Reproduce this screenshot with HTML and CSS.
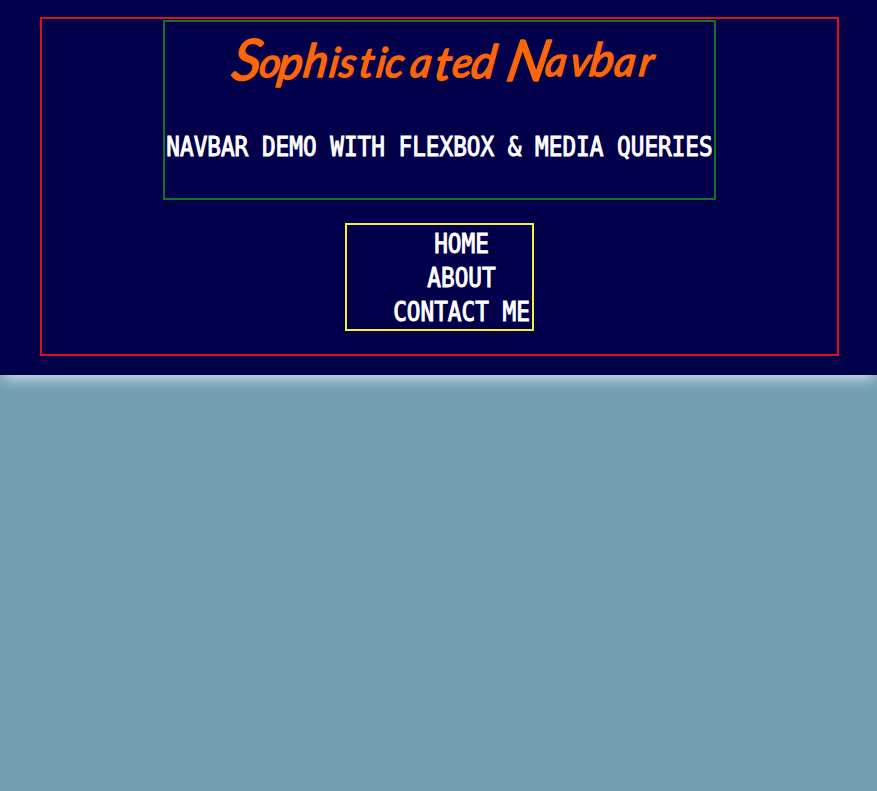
FILE: index.html
```html
<!DOCTYPE html>
<html lang="en">
<head>
<meta charset="utf-8">
<title>Sophisticated Navbar</title>
<link rel="stylesheet" href="styles.css">
</head>
<body>
<header class="header">
  <div class="container">
    <div class="brand">
      <h1 class="title">
        <svg class="logo" width="549" height="84" viewBox="165 22 549 84">
          <text transform="translate(10.8 0) skewX(-8)" y="80 77 79 77 77 77 77 77 77 77 80 77 78" x="231 258 277 302 328 338 358 375 384 409 434 451 470"><tspan class="cap">S</tspan>o<tspan class="tall">ph</tspan>istica<tspan class="tall">t</tspan>e<tspan class="tall">d</tspan></text>
          <text transform="translate(10.8 0) skewX(-12)" class="cap" x="511" y="81">N</text>
          <text transform="translate(10.8 0) skewX(-8)" y="76" x="544 569 588 613 638">av<tspan class="tall">b</tspan>ar</text>
        </svg>
      </h1>
      <p class="subtitle"><span class="pixel">NAVBAR DEMO WITH FLEXBOX &amp; MEDIA QUERIES</span></p>
    </div>
    <nav class="nav">
      <a class="pixel">HOME</a>
      <a class="pixel">ABOUT</a>
      <a class="pixel">CONTACT ME</a>
    </nav>
  </div>
</header>
</body>
</html>
```
FILE: styles.css
```css
* { box-sizing: border-box; }
body {
  margin: 0;
  min-height: 100vh;
  background: #719fb0;
}
.header {
  height: 375px;
  padding: 17px 38px 19px 40px;
  background: #03004b;
  box-shadow: 0 7px 13px -3px #d0def2;
}
.container {
  display: flex;
  flex-direction: column;
  align-items: center;
  height: 339px;
  padding-top: 1px;
  border: 2px solid #dd1020;
}
.brand {
  width: 553px;
  height: 180px;
  border: 2px solid #127324;
}
.title {
  margin: 0;
  height: 84px;
}
.logo {
  display: block;
  overflow: visible;
  fill: #fc6509;
  stroke: #fc6509;
  stroke-width: 1.6;
  stroke-linejoin: round;
  font: italic 400 41px Lato, sans-serif;
}
.cap { font-size: 57px; }
.tall { font-size: 46px; }
.subtitle {
  margin: 24px 0 0;
  height: 34px;
  text-align: center;
}
.pixel {
  display: block;
  height: 34px;
  font: 22.7px/34px "DejaVu Sans Mono", monospace;
  white-space: nowrap;
  color: #fff;
  -webkit-text-stroke: 0.9px #fff;
  transform: scaleY(1.18);
}
.nav {
  width: 189px;
  height: 108px;
  margin-top: 23px;
  padding: 2px 2px 0 46px;
  border: 2px solid #f4ee40;
  text-align: center;
}
```
